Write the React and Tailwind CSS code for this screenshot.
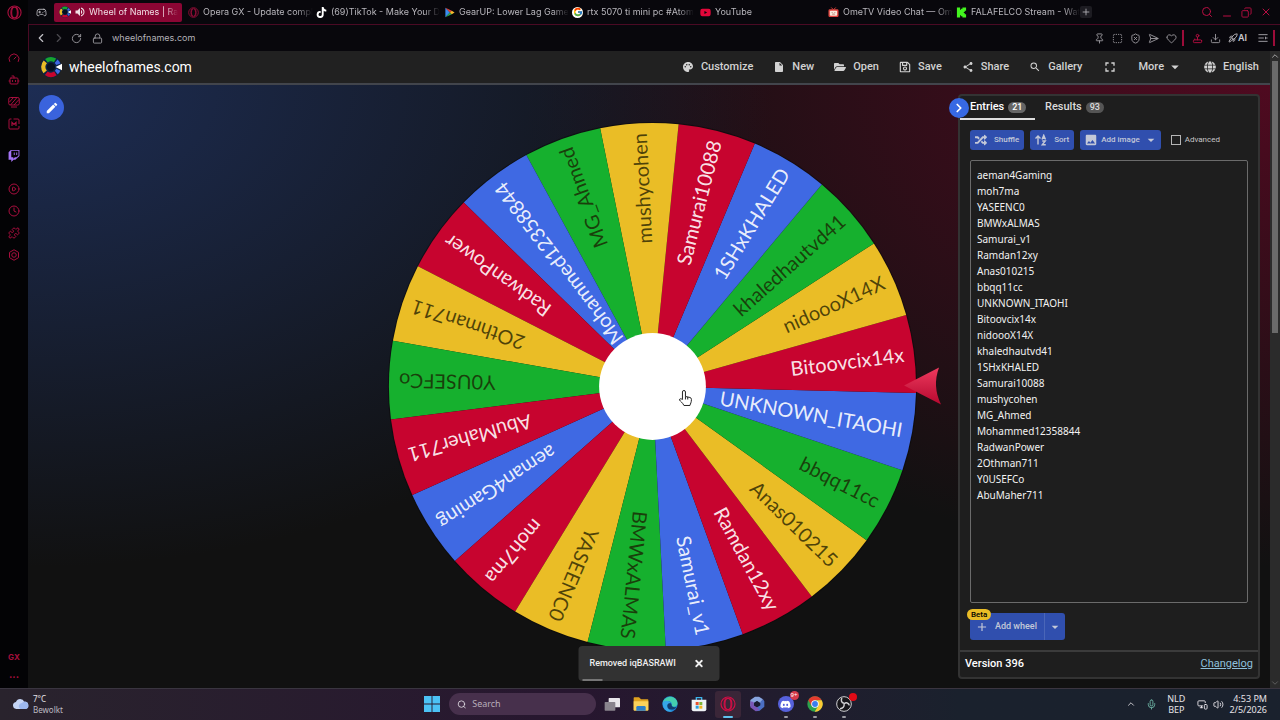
import { useState } from 'react';
import {
  ChevronLeft, ChevronRight, ChevronUp, RotateCw, Lock, Search, Minus, X, Plus, Copy,
  Pin, SquareDashed, ShieldX, SendHorizontal, Heart, Download, Rocket, Gauge, Bot,
  CirclePlay, Clock, Puzzle, Settings, Mic, MonitorSmartphone, Volume2, Joystick, Gamepad2,
} from 'lucide-react';
import {
  MdPalette, MdInsertDriveFile, MdShare, MdSearch, MdFullscreen, MdArrowDropDown, MdEdit,
  MdImage, MdAdd, MdVolumeUp,
} from 'react-icons/md';
import { FaFolderOpen, FaRegSave, FaGlobe, FaTwitch, FaDiscord, FaTiktok, FaYoutube, FaRandom } from 'react-icons/fa';
import { FcGoogle } from 'react-icons/fc';

const RED = '#c7042f';
const BLUE = '#3f69e3';
const GREEN = '#16b02e';
const YELLOW = '#eabd26';

const names = [
  'aeman4Gaming', 'moh7ma', 'YASEENC0', 'BMWxALMAS', 'Samurai_v1', 'Ramdan12xy', 'Anas010215',
  'bbqq11cc', 'UNKNOWN_ITAOHI', 'Bitoovcix14x', 'nidoooX14X', 'khaledhautvd41', '1SHxKHALED',
  'Samurai10088', 'mushycohen', 'MG_Ahmed', 'Mohammed12358844', 'RadwanPower', '2Othman711',
  'Y0USEFCo', 'AbuMaher711',
];

const palette = [BLUE, RED, YELLOW, GREEN];

const OperaLogo = ({ className }) => (
  <svg viewBox="0 0 24 24" fill="none" stroke="currentColor" strokeWidth="1.8" className={className}>
    <circle cx="12" cy="12" r="10.5" />
    <ellipse cx="12" cy="12" rx="4.6" ry="8.4" />
    <path d="M14 3.5c5 2 5 15 0 17M10 3.5c-5 2-5 15 0 17" />
  </svg>
);

const WheelLogo = ({ className }) => (
  <svg viewBox="0 0 24 24" className={className}>
    <circle cx="12" cy="12" r="11.5" fill="#0b2345" />
    <g fill="none" strokeWidth="4.8">
      <path d="M7 5.2A8.4 8.4 0 0 1 16.4 4.8" stroke="#16a52e" />
      <path d="M5.6 17.4A8.4 8.4 0 0 1 5.8 6.4" stroke="#eabd26" />
      <path d="M16.8 18.9A8.4 8.4 0 0 1 6.9 18.7" stroke="#c7042f" />
      <path d="M17.6 5.8A8.4 8.4 0 0 1 20 9" stroke="#3f69e3" />
      <path d="M20 15A8.4 8.4 0 0 1 17.8 18" stroke="#3f69e3" />
    </g>
    <circle cx="12" cy="12" r="4.5" fill="#08111f" />
    <path d="M17 12l7-3.6v7.2z" fill="#fff" />
  </svg>
);

const PlayLogo = ({ className }) => (
  <svg viewBox="0 0 24 24" className={className}>
    <path d="M3 1.5v21L13 12z" fill="#3b8df0" />
    <path d="M3 1.5L13 12l4-4z" fill="#e8453c" />
    <path d="M3 22.500L13 12l4 4z" fill="#2fa84f" />
    <path d="M17 8l6 4-6 4-4-4z" fill="#f9bb2d" />
  </svg>
);

const OmeLogo = ({ className }) => (
  <svg viewBox="0 0 24 24" className={className}>
    <path d="M7 1l5 5 5-5" fill="none" stroke="#e0453f" strokeWidth="2" />
    <rect x="1" y="5" width="22" height="17" rx="3" fill="#e0453f" />
    <rect x="4" y="8" width="16" height="11" rx="2" fill="#f6e9dc" />
    <path d="M8 12h2m4 0h2M9 15.500h6" stroke="#9b5a4a" strokeWidth="1.500" />
  </svg>
);

const KickLogo = ({ className }) => (
  <svg viewBox="0 0 24 24" className={className}>
    <path d="M2 1h7v5h2V4h3V1h8v7h-3v3h-2v2h2v3h3v7h-8v-3h-3v-2H9v5H2z" fill="#43f41f" />
  </svg>
);

const GoogleLogo = ({ className }) => (
  <span className={`${className} flex items-center justify-center rounded-full bg-white`}>
    <FcGoogle className="size-2.5" />
  </span>
);

const ChromeLogo = ({ className }) => (
  <svg viewBox="0 0 24 24" className={className}>
    <circle cx="12" cy="12" r="11.500" fill="#2ba24c" />
    <path d="M2 6.300A11.500 11.500 0 0 1 22 6.300H12L7 15z" fill="#e33b2e" />
    <path d="M22 6.300A11.500 11.500 0 0 1 11.500 23.500L17 14.800 15 6.300z" fill="#fcc934" />
    <circle cx="12" cy="12" r="5.600" fill="#fff" />
    <circle cx="12" cy="12" r="4.400" fill="#3b7ded" />
  </svg>
);

const EdgeLogo = ({ className }) => (
  <svg viewBox="0 0 24 24" className={className}>
    <circle cx="12" cy="12" r="11.500" fill="#1c7fd0" />
    <path d="M1 10C3 2 13-2 20 4c5 5 4 12-2 12-3 0-4-1-3.500-3C16 8 7 5 1 10z" fill="#44cfae" />
    <path d="M1 10c3-4 10-4 12 1-3-1-5 1-5 4 0 4 4 8 9 7-6 4-16 0-16-12z" fill="#36a7e8" />
    <path d="M8 15c0-3 2-5 5-4l1.500 2c-.6 3 3.500 5 7.500 3-3 6-14 6-14-1z" fill="#113d6d" />
  </svg>
);

const StoreLogo = ({ className }) => (
  <svg viewBox="0 0 24 24" className={className}>
    <path d="M8 6V2.500h8V6" fill="none" stroke="#3cb4ea" strokeWidth="2" />
    <path d="M1 5.500h22V20a3 3 0 0 1-3 3H4a3 3 0 0 1-3-3z" fill="#eef2f5" />
    <path d="M7 9h4.500v4.500H7z" fill="#e8532f" />
    <path d="M12.500 9H17v4.500h-4.500z" fill="#7eb53a" />
    <path d="M7 14.500h4.500V19H7z" fill="#2a9fe0" />
    <path d="M12.500 14.500H17V19h-4.500z" fill="#f1b51f" />
  </svg>
);

const FolderLogo = ({ className }) => (
  <svg viewBox="0 0 24 24" className={className}>
    <path d="M1 3a1 1 0 0 1 1-1h7l3 3h10a1 1 0 0 1 1 1v15H1z" fill="#e0a21f" />
    <path d="M1 8h22v13a1 1 0 0 1-1 1H2a1 1 0 0 1-1-1z" fill="#fbd25b" />
    <path d="M5 22v-5a2 2 0 0 1 2-2h10a2 2 0 0 1 2 2v5z" fill="#2b7fc9" />
  </svg>
);

const TaskViewLogo = ({ className }) => (
  <svg viewBox="0 0 24 24" className={className}>
    <rect x="7" y="3" width="17" height="14" rx="1" fill="#e8e6ea" />
    <rect x="1" y="9" width="16" height="13" rx="1" fill="#89848d" />
  </svg>
);

const WindowsLogo = ({ className }) => (
  <svg viewBox="0 0 24 24" className={className} fill="#4cc2f5">
    <path d="M0 0h11.300v11.300H0zM12.700 0H24v11.300H12.700zM0 12.700h11.300V24H0zM12.700 12.700H24V24H12.700z" />
  </svg>
);

const HexLogo = ({ className }) => (
  <svg viewBox="0 0 24 24" className={className}>
    <path d="M9 1h6l6 4-4 6-5-3-5 3v6l-5-2V6z" fill="#88a5df" />
    <path d="M21 5l2 3v8l-7 6-5 1 1-6 5-3V9z" fill="#4b6fc4" />
    <path d="M2 8v9l8 6 6-2-4-4-5-3V9z" fill="#7a56b5" />
    <path d="M12 7.500l4 2.300v4.400l-4 2.300-4-2.300V9.800z" fill="#1a1c30" />
  </svg>
);

const ObsLogo = ({ className }) => (
  <svg viewBox="0 0 24 24" className={className}>
    <circle cx="12" cy="12" r="11" fill="#17161a" stroke="#cfcfd2" strokeWidth="1.500" />
    <g fill="none" stroke="#cfcfd2" strokeWidth="2.200">
      <path d="M12 11c-4-1-5-5-3-8" />
      <path d="M12 12c3-3 7-2 8 2" />
      <path d="M12 12c1 4-2 7-6 7" />
    </g>
  </svg>
);

const CloudLogo = ({ className }) => (
  <svg viewBox="0 0 24 16" className={className}>
    <path d="M6 15a5 5 0 0 1-.500-9.900A6.500 6.500 0 0 1 17.500 5 5 5 0 0 1 18.500 15z" fill="#c5d5f5" />
    <path d="M12 15a4.500 4.500 0 0 1 2-8.500 5 5 0 0 1 9 3.500 4 4 0 0 1-4 5z" fill="#9db8ee" />
  </svg>
);

const Menu3 = ({ className }) => (
  <svg viewBox="0 0 24 24" fill="none" stroke="currentColor" strokeWidth="2.400" className={className}>
    <path d="M1 4h22M1 12h13M18 12h5M1 20h22M18 9v6" />
  </svg>
);

const ScreenStripes = ({ className }) => (
  <svg viewBox="0 0 24 24" fill="none" stroke="currentColor" strokeWidth="2" className={className}>
    <rect x="1.500" y="3" width="21" height="15" rx="3" />
    <path d="M3 12l8-9M5 18L18 3M12 18l10-11M6 22h12" />
  </svg>
);

const ModBox = ({ className }) => (
  <svg viewBox="0 0 24 24" fill="none" stroke="currentColor" strokeWidth="2" className={className}>
    <path d="M7 2H4a2 2 0 0 0-2 2v16a2 2 0 0 0 2 2h16a2 2 0 0 0 2-2v-4M11 2h9a2 2 0 0 1 2 2v8" />
    <path d="M8 16V9l4 4 4-4v7" strokeWidth="2.400" />
  </svg>
);

const HexNut = ({ className }) => (
  <svg viewBox="0 0 24 24" fill="none" stroke="currentColor" strokeWidth="2" strokeLinejoin="round" className={className}>
    <path d="M12 1.500l9 5.200v10.600l-9 5.200-9-5.200V6.700z" />
    <circle cx="12" cy="12" r="4.500" />
  </svg>
);

const SortIcon = ({ className }) => (
  <svg viewBox="0 0 24 24" fill="none" stroke="currentColor" strokeWidth="2.800" className={className}>
    <path d="M6 21V4M1 9l5-5 5 5" />
    <path d="M14 11l3.500-8.500L21 11M15 8.500h5M14.500 14h6l-6 7.500H21.500" />
  </svg>
);

const tabs = [
  { title: 'Opera GX - Update compl', icon: OperaLogo, color: 'text-[#a30f3d]' },
  { title: '(69)TikTok - Make Your D', icon: FaTiktok, color: 'text-white' },
  { title: 'GearUP: Lower Lag Game', icon: PlayLogo, color: '' },
  { title: 'rtx 5070 ti mini pc #Atom', icon: GoogleLogo, color: '' },
  { title: 'YouTube', icon: FaYoutube, color: 'text-[#e3073a]' },
  { title: 'OmeTV Video Chat — Om', icon: OmeLogo, color: '' },
  { title: 'FALAFELCO Stream - Wat', icon: KickLogo, color: '' },
];

const fade = '[mask-image:linear-gradient(to_right,black_85%,transparent)]';

const TabStrip = () => (
  <div className="flex h-6 items-center pl-2 pr-2 text-[9px] text-[#b9b7bd]">
    <Gamepad2 className="mr-[7px] size-[11px] shrink-0" />
    <button className="flex h-[19px] w-32 min-w-0 items-center gap-[3px] rounded-xs bg-[#8b0634] pl-[5px] pr-[6px] text-[#f1dfe5]">
      <WheelLogo className="size-3 shrink-0" />
      <MdVolumeUp className="size-3 shrink-0" />
      <span className={`flex-1 text-left whitespace-nowrap ${fade}`}>Wheel of Names | Ra</span>
    </button>
    {tabs.map(({ title, icon: Icon, color }) => (
      <button key={title} className="flex h-5 w-32 min-w-0 items-center gap-1 pl-[6px] pr-[6px]">
        <Icon className={`size-[11px] shrink-0 ${color}`} />
        <span className={`flex-1 text-left whitespace-nowrap ${fade}`}>{title}</span>
      </button>
    ))}
    <button aria-label="New tab" className="ml-[2px] flex size-3 items-center justify-center rounded-xs bg-[#1d1c22]">
      <Plus className="size-[10px]" />
    </button>
    <div className="ml-auto flex items-center gap-2 text-[#b80e42]">
      <button aria-label="Search tabs"><Search className="size-3" /></button>
      <button aria-label="Minimize" className="pt-2"><Minus className="size-3" /></button>
      <button aria-label="Restore"><Copy className="size-[11px] -scale-x-100" /></button>
      <button aria-label="Close"><X className="size-3" /></button>
    </div>
  </div>
);

const AddressBar = () => (
  <div className="flex h-[27px] items-center border-t border-l border-[#4a0a24] pr-[5px] pl-[5px] text-[#9b999f]">
    <button aria-label="Back"><ChevronLeft className="size-3.5 text-[#c2c0c6]" /></button>
    <button aria-label="Forward" className="ml-1"><ChevronRight className="size-3.5 text-[#4c4a50]" /></button>
    <button aria-label="Reload" className="ml-[5px]"><RotateCw className="size-[11px]" /></button>
    <Lock className="ml-2.5 size-[11px]" />
    <input aria-label="Address" defaultValue="wheelofnames.com" className="ml-[9px] min-w-0 flex-1 bg-transparent text-[9px] text-[#b3b1b7] outline-none" />
    <div className="flex items-center gap-[7px]">
      <Pin className="size-[11px]" />
      <SquareDashed className="size-[11px]" />
      <ShieldX className="size-[11px]" />
      <SendHorizontal className="size-[11px]" />
      <Heart className="size-[11px]" />
    </div>
    <span className="ml-[5px] h-4 w-0.5 bg-[#9c0c39]" />
    <div className="ml-2 flex items-center gap-[7px]">
      <Joystick className="size-[11px] text-[#b80e42]" />
      <Download className="size-[11px]" />
      <span className="flex items-center text-[9px] font-semibold text-[#c9c7cd]">
        <Rocket className="size-2.5" />AI
      </span>
      <Menu3 className="ml-1 size-2.5" />
    </div>
    <span className="ml-[5px] h-4 w-0.5 bg-[#9c0c39]" />
  </div>
);

const sideTop = [Gauge, Bot, ScreenStripes, ModBox];
const sideBottom = [CirclePlay, Clock, Puzzle, HexNut];

const Sidebar = () => (
  <aside className="flex w-7 shrink-0 flex-col items-center bg-[#030305] pb-1.5 text-[#a80f3e]">
    <OperaLogo className="mt-[5px] size-[15px]" />
    <div className="mt-8 flex flex-col gap-2.5">
      {sideTop.map((Icon, i) => <Icon key={i} className="size-3" />)}
    </div>
    <FaTwitch className="mt-5 size-3 text-[#a473f5]" />
    <div className="mt-[21px] flex flex-col gap-2.5">
      {sideBottom.map((Icon, i) => <Icon key={i} className="size-3" />)}
    </div>
    <span className="mt-auto text-[8px] font-bold">GX</span>
    <span className="mt-1 text-[10px] font-bold">...</span>
  </aside>
);

const menu = [
  { label: 'Customize', icon: MdPalette },
  { label: 'New', icon: MdInsertDriveFile },
  { label: 'Open', icon: FaFolderOpen },
  { label: 'Save', icon: FaRegSave },
  { label: 'Share', icon: MdShare },
  { label: 'Gallery', icon: MdSearch },
];

const SiteHeader = () => (
  <header className="flex h-[34px] shrink-0 items-center justify-between border-b-2 border-[#42454c] bg-[#212121] pr-[11px] pl-3 font-[Roboto,sans-serif]">
    <a href="#home" className="flex items-center gap-[7px] text-sm text-white">
      <WheelLogo className="size-[22px]" />
      wheelofnames.com
    </a>
    <nav className="flex items-center gap-5 text-[11px] font-medium text-[#d2d2d2]">
      {menu.map(({ label, icon: Icon }) => (
        <button key={label} className="flex items-center gap-[7px]">
          <Icon className="size-3" />
          {label}
        </button>
      ))}
      <button aria-label="Fullscreen"><MdFullscreen className="size-4" /></button>
      <button className="flex items-center">
        More<MdArrowDropDown className="ml-0.5 size-[18px]" />
      </button>
      <button className="flex items-center gap-[7px]">
        <FaGlobe className="size-3" />
        English
      </button>
    </nav>
  </header>
);

const Wheel = () => {
  const radius = 264;
  const step = 360 / names.length;
  // angle of the leading edge of the first entry, measured clockwise from 3 o'clock
  const offset = 1.4 + 8 * step;
  const point = (deg) => {
    const rad = (deg * Math.PI) / 180;
    return `${radius * Math.cos(rad)} ${radius * Math.sin(rad)}`;
  };

  return (
    <svg viewBox="-305 -292 611 584" className="h-full w-full" role="img" aria-label="Wheel of names">
      <defs>
        <linearGradient id="pointer" x1="0" y1="0" x2="0" y2="1">
          <stop offset="0" stopColor="#ee3a5e" />
          <stop offset="1" stopColor="#b5082f" />
        </linearGradient>
      </defs>
      <circle r="265" fill="#0a0a0a" fillOpacity="0.6" />
      {names.map((name, i) => {
        const start = offset - i * step;
        const color = i === names.length - 1 ? RED : palette[i % 4];
        return (
          <path key={name} d={`M0 0L${point(start)}A${radius} ${radius} 0 0 1 ${point(start + step)}Z`} fill={color} />
        );
      })}
      {names.map((name, i) => {
        const dark = i !== names.length - 1 && i % 4 > 1;
        return (
          <text
            key={name}
            transform={`rotate(${offset + step / 2 - i * step})`}
            x="254"
            dy="7"
            textAnchor="end"
            fill={dark ? '#1a1a00' : '#ffffff'}
            fillOpacity={dark ? 0.75 : 0.9}
            className="font-[Lato,sans-serif] text-[20px]"
          >
            {name}
          </text>
        );
      })}
      <circle r="53.500" fill="#fff" />
      <path d="M252 -1L287 -19Q280 0 289 18Z" fill="url(#pointer)" />
      <g transform="translate(26 4)" fill="#fff" stroke="#222" strokeWidth="1" strokeLinejoin="round">
        <path d="M4 9V1.500a1.500 1.500 0 0 1 3 0V6l4.500 1a2 2 0 0 1 1.500 2c0 3-1 4-1.500 6H5.500C4 12 2 11 1 9.500c0-1.500 1.500-1.500 3-.500zM7 6v3M9.300 6.500V9" />
      </g>
    </svg>
  );
};

const toolButton = 'flex h-5 items-center rounded-[3px] bg-[#304fae] text-[#c3c8d8] font-medium';

const EntriesPanel = ({ version }) => {
  const [tab, setTab] = useState('entries');

  return (
    <section className="relative flex w-[302px] shrink-0 flex-col rounded-sm border-2 border-[#333] bg-[#1e1e1e] font-[Roboto,sans-serif] text-white">
      <button aria-label="Hide panel" className="absolute top-0.5 -left-[11px] flex size-5 items-center justify-center rounded-full bg-[#3769e3]">
        <ChevronRight className="size-3.5" strokeWidth={3} />
      </button>
      <div className="flex h-6 shrink-0 text-[11px] font-medium">
        <button onClick={() => setTab('entries')} className={`flex w-[75px] items-center gap-1 border-b-2 pl-2.5 ${tab === 'entries' ? 'border-[#ddd]' : 'border-transparent'}`}>
          Entries <span className="rounded-full bg-[#666] px-1 text-[9px] leading-[11px]">21</span>
        </button>
        <button onClick={() => setTab('results')} className={`flex items-center gap-1 border-b-2 px-2.5 text-[#dadada] ${tab === 'results' ? 'border-[#ddd]' : 'border-transparent'}`}>
          Results <span className="rounded-full bg-[#555] px-1 text-[9px] leading-[11px]">93</span>
        </button>
      </div>
      <div className="flex flex-1 flex-col px-2.5 pt-2.5 pb-2.5">
        <div className="flex items-center gap-1.5 text-[8px]">
          <button className={`${toolButton} gap-[7px] px-[5px]`}><FaRandom className="size-3" />Shuffle</button>
          <button className={`${toolButton} gap-[7px] px-[5px]`}><SortIcon className="size-3" />Sort</button>
          <button className={`${toolButton} gap-[3px] pr-0.5 pl-1`}>
            <MdImage className="size-3.5" />Add image<MdArrowDropDown className="size-4" />
          </button>
          <label className="ml-1 flex items-center gap-1 text-[#c6c6c6]">
            <input type="checkbox" className="size-2.5 appearance-none border border-[#b5b5b5]" />
            Advanced
          </label>
        </div>
        <textarea
          aria-label="Entries"
          spellCheck={false}
          defaultValue={names.join('\n')}
          className="mt-2.5 flex-1 resize-none overflow-hidden rounded-xs border border-[#6b6b6b] bg-transparent p-1.5 font-['Noto_Sans',sans-serif] text-[10px] leading-4 text-[#f2f2f2] outline-none"
        />
        <div className="relative mt-2.5 flex h-[27px] w-fit shrink-0 items-stretch rounded-[3px] bg-[#304fae] text-[9px] font-medium text-[#c3c8d8]">
          <button className="flex items-center gap-1.5 pr-[7px] pl-[5px]"><MdAdd className="size-3.5" />Add wheel</button>
          <button aria-label="More wheel options" className="flex w-[21px] items-center justify-center border-l border-[#4a66b8]"><MdArrowDropDown className="size-4" /></button>
          <span className="absolute -top-1 -left-[3px] rounded-full bg-[#eabd26] px-1 text-[8px] leading-[11px] text-black">Beta</span>
        </div>
      </div>
      <footer className="flex h-[27px] shrink-0 items-center justify-between border-t-2 border-[#3b3b3b] px-[5px] text-[11px]">
        <span className="font-medium">Version {version}</span>
        <a href="#changelog" className="text-[#8fc0dc] underline">Changelog</a>
      </footer>
    </section>
  );
};

const Toast = () => (
  <div role="status" className="absolute bottom-[7px] left-1/2 flex h-[35px] w-[141px] -translate-x-1/2 items-center justify-between rounded-sm bg-[#323232] pr-[15px] pl-[11px] font-[Roboto,sans-serif] text-[9px] font-medium text-[#eee]">
    Removed iqBASRAWI
    <button aria-label="Dismiss"><X className="size-[11px]" strokeWidth={4} /></button>
    <span className="absolute bottom-0 left-1 h-0.5 w-5 bg-[#767676]" />
  </div>
);

const apps = [
  { name: 'Task view', icon: TaskViewLogo },
  { name: 'Files', icon: FolderLogo },
  { name: 'Edge', icon: EdgeLogo },
  { name: 'Store', icon: StoreLogo },
  { name: 'Opera GX', icon: OperaLogo, active: true },
  { name: 'Copilot', icon: HexLogo },
  { name: 'Discord', icon: FaDiscord, running: true, badge: '9+' },
  { name: 'Chrome', icon: ChromeLogo, running: true },
  { name: 'OBS', icon: ObsLogo, running: true, dot: true },
];

const Taskbar = () => (
  <footer className="grid h-8 shrink-0 grid-cols-[1fr_auto_1fr] items-center border-t border-[#3a3540] bg-linear-to-r from-[#29232d] via-[#27162f] via-45% to-[#1a212d] to-75% pr-3 pb-px pl-3 font-['Noto_Sans',sans-serif] text-[9px] text-[#e6e3e8]">
    <div className="flex items-center gap-1">
      <CloudLogo className="h-3 w-[17px]" />
      <div className="text-[8px] leading-[11px]">
        <div>7°C</div>
        <div className="text-[#bdb9c1]">Bewolkt</div>
      </div>
    </div>
    <div className="flex items-center">
      <button aria-label="Start"><WindowsLogo className="size-4" /></button>
      <label className="ml-[9px] flex h-[22px] w-[147px] items-center gap-1.5 rounded-full bg-[#47304c] px-2">
        <Search className="size-[11px]" />
        <input aria-label="Search" placeholder="Search" className="w-full bg-transparent text-[9px] outline-none placeholder:text-[#b8aeba]" />
      </label>
      <div className="ml-[3px] flex gap-[3px]">
        {apps.map(({ name, icon: Icon, active, running, badge, dot }) => (
          <button key={name} aria-label={name} className={`relative flex h-[27px] w-[26px] items-center justify-center rounded-[3px] ${active ? 'bg-[#3a2638] text-[#cf0f45]' : 'text-white'}`}>
            {name === 'Discord' ? (
              <span className="flex size-4 items-center justify-center rounded-full bg-[#5661dc]"><Icon className="size-[11px]" /></span>
            ) : (
              <Icon className="size-4" />
            )}
            {active && <span className="absolute bottom-0 h-0.5 w-2.5 rounded-full bg-[#5fc3ef]" />}
            {running && <span className="absolute bottom-0 h-0.5 w-1 rounded-full bg-[#9a9aa2]" />}
            {badge && <span className="absolute top-0 right-0 flex size-[9px] items-center justify-center rounded-full bg-[#d63a4c] text-[6px]">{badge}</span>}
            {dot && <span className="absolute top-0.5 right-0 size-2 rounded-full bg-[#e00b16]" />}
          </button>
        ))}
      </div>
    </div>
    <div className="flex items-center justify-end pr-px leading-[11px]">
      <ChevronUp className="size-2.5" />
      <Mic className="ml-2.5 size-[11px] text-[#6fb5a5]" />
      <div className="ml-2.5 text-center"><div>NLD</div><div>BEP</div></div>
      <MonitorSmartphone className="ml-3 size-[11px]" />
      <Volume2 className="ml-[5px] size-[11px]" />
      <div className="ml-[5px] text-right"><div>4:53 PM</div><div>2/5/2026</div></div>
    </div>
  </footer>
);

const App = () => (
  <div className="flex h-screen flex-col overflow-hidden bg-[#08070c] font-[Inter,sans-serif] text-white">
    <div className="flex min-h-0 flex-1">
      <Sidebar />
      <div className="flex min-w-0 flex-1 flex-col">
        <TabStrip />
        <AddressBar />
        <div className="flex min-h-0 flex-1">
          <div className="flex min-w-0 flex-1 flex-col">
            <SiteHeader />
            <main className="relative flex min-h-0 flex-1 bg-[#111] bg-[radial-gradient(ellipse_60%_80%_at_0%_0%,#1d2d54,transparent),radial-gradient(ellipse_60%_80%_at_100%_0%,#4f0a20,transparent)] py-[9px] pr-2.5">
              <div className="w-80 shrink-0 pt-px pl-[11px]">
                <button aria-label="Edit title" className="flex size-[25px] items-center justify-center rounded-full bg-[#3a63dd]">
                  <MdEdit className="size-3.5" />
                </button>
              </div>
              <div className="min-w-0 flex-1">
                <Wheel />
              </div>
              <EntriesPanel version={396} />
              <Toast />
            </main>
          </div>
          <div className="flex w-2.5 shrink-0 flex-col items-center bg-[#2b2b2b]">
            <ChevronUp className="size-2.5 text-[#bbb]" />
            <div className="h-[272px] w-1.5 bg-[#6a6a6a]" />
            <ChevronUp className="mt-auto size-2.5 rotate-180 text-[#666]" />
          </div>
        </div>
      </div>
    </div>
    <Taskbar />
  </div>
);

export default App;
